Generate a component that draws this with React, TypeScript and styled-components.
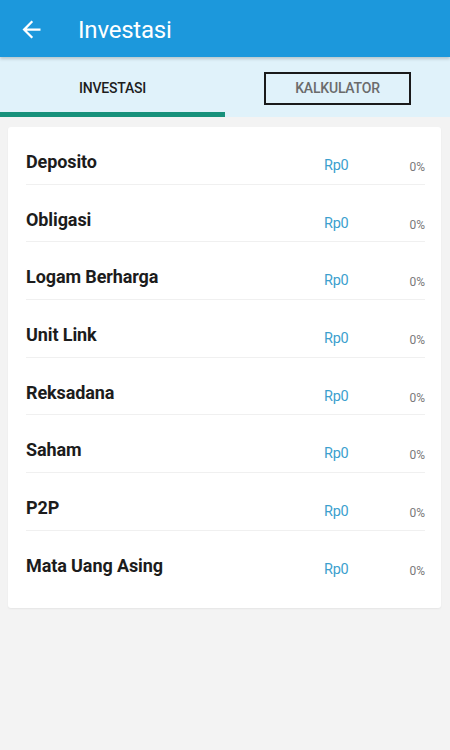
import React from "react";
import styled, { createGlobalStyle } from "styled-components";

const Global = createGlobalStyle`
  html, body { margin: 0; padding: 0; background: #f3f3f3; }
  body { font-family: Roboto, "Noto Sans", Arial, sans-serif; }
  * { box-sizing: border-box; }
`;

const Page = styled.div`
  width: 450px;
  min-height: 750px;
  background: #f3f3f3;
  display: flex;
  flex-direction: column;
`;

const Header = styled.header`
  height: 57px;
  background: #1c98dc;
  display: flex;
  align-items: center;
  padding-left: 18px;
  gap: 33px;
  position: relative;
  z-index: 2;
  box-shadow: 0 2px 3px rgba(0, 0, 0, 0.18);
`;

const BackButton = styled.button`
  border: 0;
  background: transparent;
  padding: 0;
  width: 27px;
  height: 27px;
  display: flex;
  align-items: center;
  justify-content: center;
  color: #fff;
  margin-top: 1px;
`;

const Title = styled.h1`
  margin: 0;
  color: #fff;
  font-family: Roboto, sans-serif;
  font-weight: 400;
  font-size: 24px;
  letter-spacing: -0.2px;
  line-height: 1;
  margin-top: 2px;
`;

const TabBar = styled.nav`
  height: 60px;
  background: #e0f2fa;
  display: flex;
`;

const Tab = styled.div<{ $active?: boolean }>`
  flex: 1;
  display: flex;
  align-items: center;
  justify-content: center;
  padding-top: 7px;
  border-bottom: 5px solid ${(p) => (p.$active ? "#17917b" : "transparent")};
`;

const TabLabel = styled.span<{ $boxed?: boolean; $active?: boolean }>`
  font-family: Roboto, sans-serif;
  font-weight: 500;
  font-size: 14px;
  letter-spacing: -0.2px;
  color: ${(p) => (p.$active ? "#1d1d1d" : "#6b6b6b")};
  ${(p) =>
    p.$boxed
      ? `
    width: 147px;
    height: 33px;
    border: 2px solid #1a1a1a;
    display: flex;
    align-items: center;
    justify-content: center;
  `
      : ""}
`;

const Content = styled.main`
  padding: 10px 9px 0 8px;
`;

const Card = styled.section`
  background: #fff;
  border-radius: 3px;
  box-shadow: 0 1px 2px rgba(0, 0, 0, 0.06);
  padding: 0 16px 19px 18px;
`;

const Row = styled.div<{ $last?: boolean }>`
  height: 57.7px;
  display: flex;
  align-items: flex-start;
  padding-top: 24px;
  border-bottom: 1px solid ${(p) => (p.$last ? "transparent" : "#f0f0f0")};
`;

const Name = styled.span`
  flex: 1;
  font-family: Roboto, sans-serif;
  font-weight: 700;
  font-size: 18px;
  line-height: 22px;
  color: #1c1c1c;
  letter-spacing: -0.1px;
`;

const Amount = styled.span`
  font-family: Roboto, sans-serif;
  font-size: 14.5px;
  line-height: 22px;
  color: #3c9fce;
  margin-top: 4px;
  width: 77px;
  letter-spacing: -0.3px;
`;

const Percent = styled.span`
  font-family: Roboto, sans-serif;
  font-size: 12px;
  line-height: 22px;
  color: #7a7a7a;
  margin-top: 5px;
  width: 24px;
  text-align: right;
`;

const items = [
  "Deposito",
  "Obligasi",
  "Logam Berharga",
  "Unit Link",
  "Reksadana",
  "Saham",
  "P2P",
  "Mata Uang Asing",
];

export default function App() {
  return (
    <Page>
      <Global />
      <Header>
        <BackButton aria-label="Kembali">
          <svg width="27" height="27" viewBox="0 0 24 24" fill="currentColor">
            <path d="M20 11H7.83l5.59-5.59L12 4l-8 8 8 8 1.41-1.41L7.83 13H20v-2z" />
          </svg>
        </BackButton>
        <Title>Investasi</Title>
      </Header>
      <TabBar>
        <Tab $active>
          <TabLabel $active>INVESTASI</TabLabel>
        </Tab>
        <Tab>
          <TabLabel $boxed>KALKULATOR</TabLabel>
        </Tab>
      </TabBar>
      <Content>
        <Card>
          {items.map((name, i) => (
            <Row key={name} $last={i === items.length - 1}>
              <Name>{name}</Name>
              <Amount>Rp0</Amount>
              <Percent>0%</Percent>
            </Row>
          ))}
        </Card>
      </Content>
    </Page>
  );
}
